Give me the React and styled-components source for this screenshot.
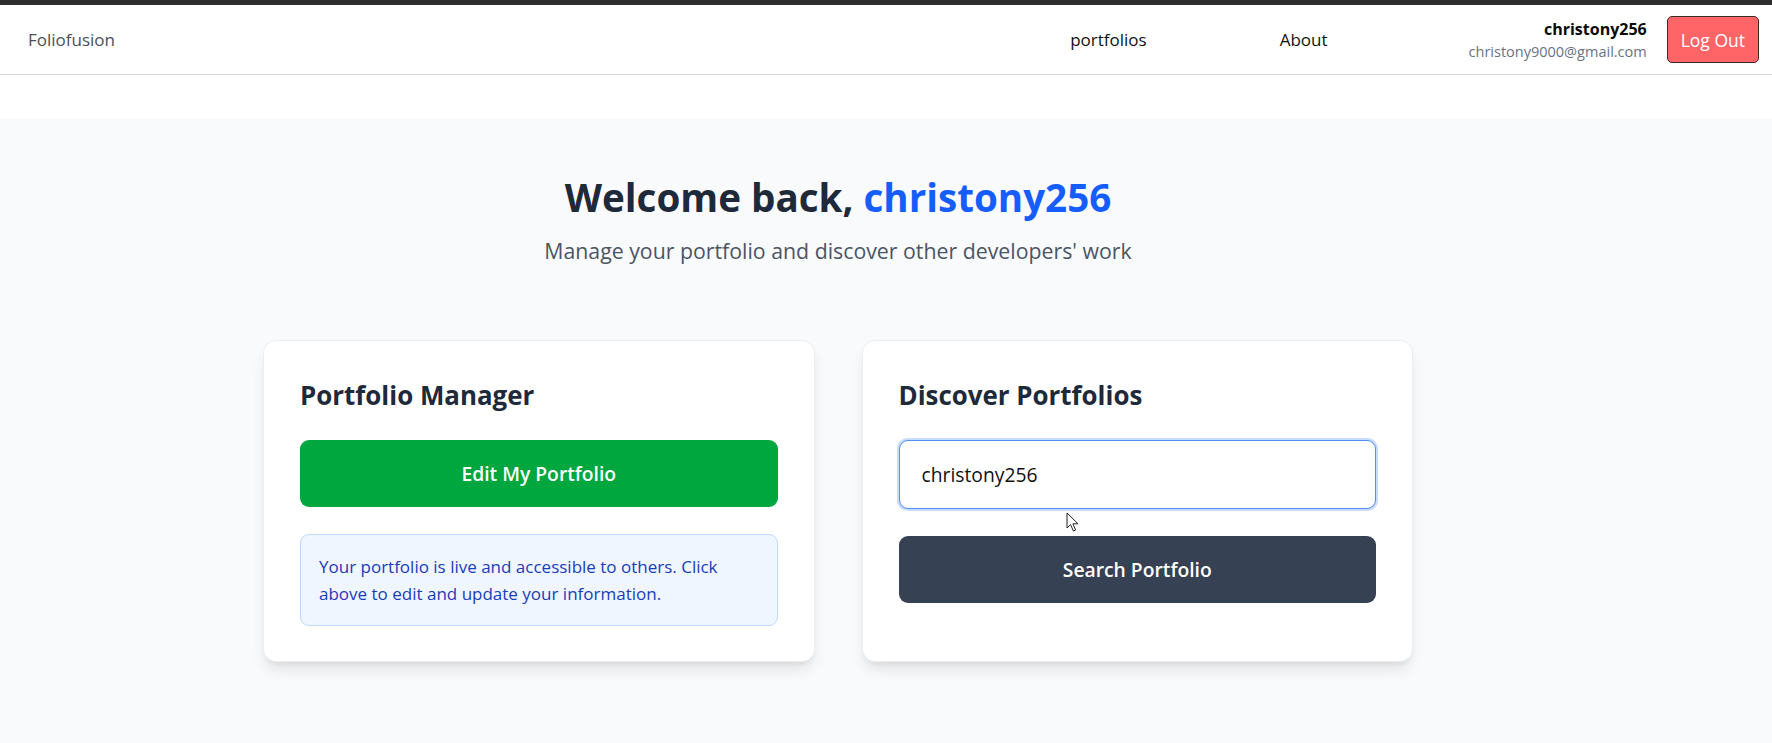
import React, { useState } from 'react';
import styled, { createGlobalStyle } from 'styled-components';

const GlobalStyle = createGlobalStyle`
  html, body {
    margin: 0;
    padding: 0;
    background: #ffffff;
    font-family: 'Open Sans', 'Noto Sans', 'Liberation Sans', sans-serif;
  }
  * {
    box-sizing: border-box;
  }
`;

export default function App() {
  const [Query, setQuery] = useState('christony256');

  const onQueryHandler = event => {
    setQuery(event.currentTarget.value);
  };

  return (
    <Page>
      <GlobalStyle />
      <TopStrip />
      <Header>
        <Brand>Foliofusion</Brand>
        <NavRight>
          <NavLinks>
            <NavLink>portfolios</NavLink>
            <NavLink>About</NavLink>
          </NavLinks>
          <UserArea>
            <UserInfo>
              <UserName>christony256</UserName>
              <UserEmail>christony9000@gmail.com</UserEmail>
            </UserInfo>
            <LogOutButton>Log Out</LogOutButton>
          </UserArea>
        </NavRight>
      </Header>
      <Main>
        <Container>
          <Hero>
            <Heading>
              Welcome back, <Highlight>christony256</Highlight>
            </Heading>
            <Subtitle>
              Manage your portfolio and discover other developers' work
            </Subtitle>
          </Hero>
          <CardGrid>
            <Card>
              <CardTitle>Portfolio Manager</CardTitle>
              <ActionButton $bg="#00a63e">Edit My Portfolio</ActionButton>
              <InfoBox>
                Your portfolio is live and accessible to others. Click above to
                edit and update your information.
              </InfoBox>
            </Card>
            <Card>
              <CardTitle>Discover Portfolios</CardTitle>
              <SearchInput
                type="text"
                value={Query}
                onChange={onQueryHandler}
              />
              <ActionButton $bg="#364153">Search Portfolio</ActionButton>
            </Card>
          </CardGrid>
        </Container>
      </Main>
      <Cursor width="14" height="21" viewBox="0 0 14 21">
        <path
          d="M1 1 L1 16 L4.6 12.6 L7.4 19 L9.6 18 L6.9 11.8 L12 11.8 Z"
          fill="#ffffff"
          stroke="#222222"
          strokeWidth="1"
          strokeLinejoin="round"
        />
      </Cursor>
    </Page>
  );
}

const Page = styled.div`
  position: relative;
  display: flex;
  flex-direction: column;
  height: 100vh;
  overflow: hidden;
  background: #ffffff;
`;

const TopStrip = styled.div`
  flex: none;
  height: 5px;
  background: #2e2e2e;
`;

const Header = styled.header`
  flex: none;
  display: flex;
  align-items: center;
  justify-content: space-between;
  height: 70px;
  padding: 0 13px 0 28px;
  border-bottom: 1px solid #d6d6d6;
  background: #ffffff;
`;

const Brand = styled.div`
  font-size: 17px;
  color: #4b4f58;
`;

const NavRight = styled.nav`
  display: flex;
  align-items: center;
  gap: 141px;
`;

const NavLinks = styled.div`
  display: flex;
  align-items: center;
  gap: 133px;
`;

const NavLink = styled.a`
  font-size: 17px;
  color: #111111;
  cursor: pointer;
`;

const UserArea = styled.div`
  display: flex;
  align-items: center;
  gap: 20px;
`;

const UserInfo = styled.div`
  display: flex;
  flex-direction: column;
  align-items: flex-end;
`;

const UserName = styled.span`
  font-size: 16px;
  font-weight: 700;
  line-height: 24px;
  color: #0a0a0a;
`;

const UserEmail = styled.span`
  font-size: 14.5px;
  line-height: 22px;
  color: #6a7282;
`;

const LogOutButton = styled.button`
  height: 47px;
  padding: 0 13px;
  font-family: inherit;
  font-size: 17.5px;
  color: #ffffff;
  background: #ff6467;
  border: 1px solid #3a2a2a;
  border-radius: 5px;
  cursor: pointer;
`;

const Main = styled.main`
  flex: 1;
  margin-top: 44px;
  padding: 56px 96px 0 0;
  background: #f9fafb;
`;

const Container = styled.div`
  width: 1150px;
  margin: 0 auto;
`;

const Hero = styled.section`
  text-align: center;
`;

const Heading = styled.h1`
  margin: 0 0 15px;
  font-size: 38.6px;
  line-height: 45px;
  font-weight: 700;
  color: #1e2939;
`;

const Highlight = styled.span`
  color: #155dfc;
`;

const Subtitle = styled.p`
  margin: 0 0 73px;
  font-size: 21.3px;
  line-height: 32px;
  color: #4a5565;
`;

const CardGrid = styled.div`
  display: grid;
  grid-template-columns: 1fr 1fr;
  gap: 47px;
`;

const Card = styled.div`
  display: flex;
  flex-direction: column;
  gap: 27px;
  padding: 36px 36px 35px;
  background: #ffffff;
  border: 1px solid #eceef1;
  border-radius: 13px;
  box-shadow: 0 10px 15px -3px rgba(0, 0, 0, 0.1),
    0 4px 6px -4px rgba(0, 0, 0, 0.1);
`;

const CardTitle = styled.h2`
  margin: 0;
  font-size: 25.9px;
  line-height: 36px;
  font-weight: 700;
  color: #1e2939;
`;

const ActionButton = styled.button`
  width: 100%;
  height: 67px;
  font-family: inherit;
  font-size: 19.3px;
  font-weight: 600;
  color: #ffffff;
  background: ${props => props.$bg};
  border: none;
  border-radius: 9px;
  cursor: pointer;
`;

const InfoBox = styled.p`
  margin: 0;
  padding: 18px;
  font-size: 17px;
  line-height: 27px;
  color: #193cb8;
  background: #eff6ff;
  border: 1px solid #bedbff;
  border-radius: 9px;
`;

const SearchInput = styled.input`
  width: 100%;
  height: 69px;
  padding: 0 22px;
  font-family: inherit;
  font-size: 19.3px;
  color: #111111;
  background: #ffffff;
  border: 1px solid #4f8ef5;
  border-radius: 9px;
  box-shadow: 0 0 0 2px rgba(96, 155, 250, 0.35);
  outline: none;
`;

const Cursor = styled.svg`
  position: absolute;
  left: 1066px;
  top: 512px;
  pointer-events: none;
`;
